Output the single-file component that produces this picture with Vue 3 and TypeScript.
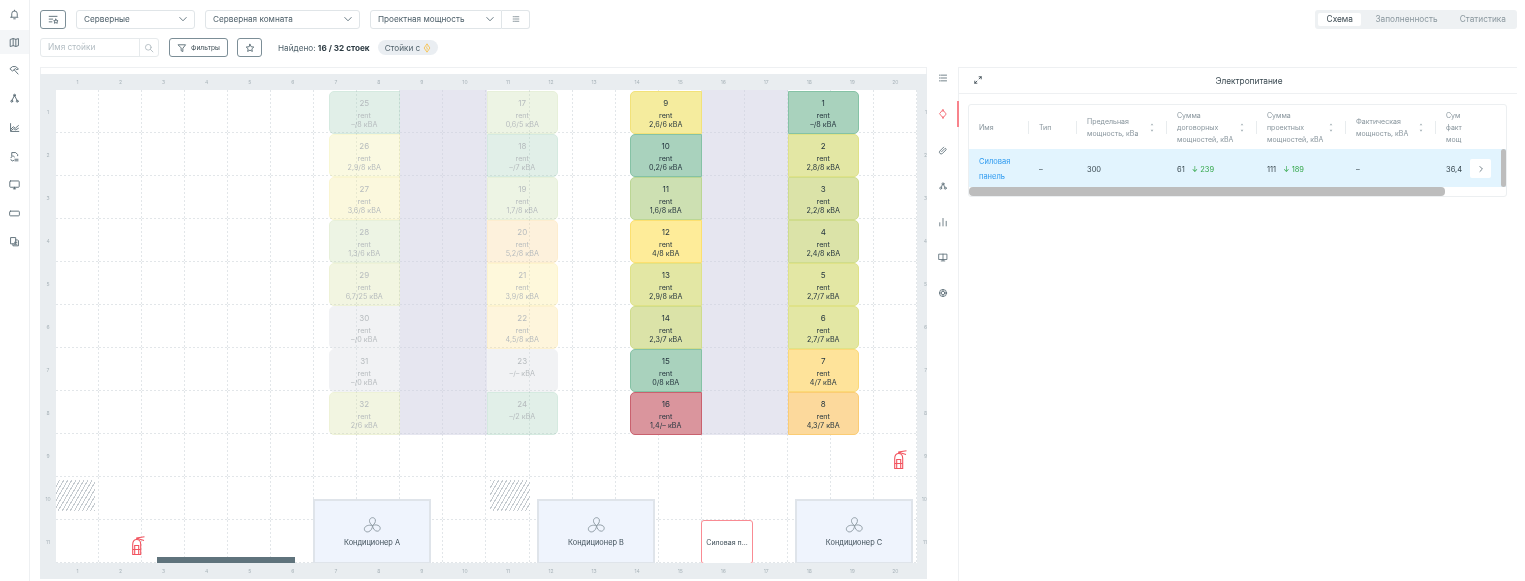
<template>
  <div class="page">
    <aside class="side">
      <div v-for="(name, i) in sideIcons" :key="name" class="side-item" :class="{ active: i === 1 }">
        <svg class="ico" viewBox="0 0 14 14"><path v-for="d in icons[name]" :key="d" :d="d" /></svg>
      </div>
    </aside>

    <main class="main">
      <div class="toolbar">
        <button class="icon-btn strong wide">
          <svg class="ico" viewBox="0 0 14 14"><path v-for="d in icons.listStar" :key="d" :d="d" /></svg>
        </button>
        <div class="select s1">Серверные<svg class="chev" viewBox="0 0 10 10"><path d="M1.5 3.2 5 6.8l3.5-3.6" /></svg></div>
        <div class="select s2">Серверная комната<svg class="chev" viewBox="0 0 10 10"><path d="M1.5 3.2 5 6.8l3.5-3.6" /></svg></div>
        <div class="joined">
          <div class="select s3">Проектная мощность<svg class="chev" viewBox="0 0 10 10"><path d="M1.5 3.2 5 6.8l3.5-3.6" /></svg></div>
          <button class="icon-btn list-btn">
            <svg class="ico tiny" viewBox="0 0 14 14"><path v-for="d in icons.list" :key="d" :d="d" /></svg>
          </button>
        </div>
        <div class="tabs">
          <span v-for="(t, i) in tabs" :key="t" class="tab" :class="{ on: i === 0 }">{{ t }}</span>
        </div>
      </div>

      <div class="toolbar second">
        <div class="search">
          <span class="placeholder">Имя стойки</span>
          <span class="search-btn">
            <svg class="ico small light" viewBox="0 0 14 14"><circle cx="6" cy="6" r="4" /><path d="m9 9 3.5 3.5" /></svg>
          </span>
        </div>
        <button class="filter-btn">
          <svg class="ico small dark" viewBox="0 0 14 14"><path d="M2 2.5h10L8.2 7.4V12L5.8 10.8V7.4z" /></svg>
          Фильтры
        </button>
        <button class="icon-btn strong star">
          <svg class="ico small dark" viewBox="0 0 14 14"><path d="m7 1.8 1.6 3.4 3.7.5-2.7 2.5.7 3.6L7 10l-3.3 1.8.7-3.6-2.7-2.5 3.7-.5z" /></svg>
        </button>
        <span class="found">Найдено: <b>16 / 32 стоек</b></span>
        <span class="chip">Стойки с
          <svg class="bolt" viewBox="0 0 10 12"><path d="M5 .8 8.6 6 5 11.2 1.4 6z" /><path class="inner" d="M5.5 3 3.9 6.2h2L4.6 9" /></svg>
        </span>
      </div>

      <div class="content">
        <section class="map">
          <div class="strip"></div>
          <div class="map-grid">
            <div class="corner"></div>
            <div class="ruler-x"><span v-for="n in 20" :key="n">{{ n }}</span></div>
            <div class="corner"></div>

            <div class="ruler-y"><span v-for="n in 11" :key="n">{{ n }}</span></div>
            <div class="canvas">
              <div class="cells"><i v-for="n in 220" :key="n"></i></div>
              <div v-for="(c, i) in corridors" :key="i" class="corridor" :style="box(c.x, 90, c.w, 345)"></div>
              <div
                v-for="r in racks"
                :key="r.n"
                class="rack"
                :class="[r.side, { faded: r.n > 16 }]"
                :style="rackStyle(r)"
              >
                <b>{{ r.n }}</b>
                <span v-if="r.rent">rent</span>
                <span>{{ r.val }} кВА</span>
              </div>
              <div class="hatch" :style="box(56, 480, 39, 31)"></div>
              <div class="hatch" :style="box(490, 480, 40, 31)"></div>
              <svg v-for="(e, i) in extinguishers" :key="i" class="ext" :style="box(e.x, e.y, 15, 20)" viewBox="0 0 15 20">
                <path d="M1.7 18.5V8.5C1.7 5 3.5 3.5 5.7 3.5S9.7 5 9.7 8.5v10z" />
                <path d="M3.7 18.5V9.500h4v9M1.700 13.500h8" />
                <path d="M5.7 3.500V2L13.500.8M5.700 2.200 13 4.500" />
              </svg>
              <div class="duct" :style="box(157, 557, 138, 7)"></div>
              <div v-for="a in coolers" :key="a.name" class="cooler" :style="box(a.x, 499, 118, 65)">
                <svg class="fan" viewBox="0 0 20 20">
                  <path d="M10 10C7 8 6 5 7.500 3 9 1 12.500 1.500 13 4 13.500 6.500 12 8.500 10 10z" />
                  <path d="M10 10C12.500 9 15.500 9 17.500 11 19 13 17.500 16 15 16 12.500 16 10.500 13.500 10 10z" />
                  <path d="M10 10C10 13 8.500 15.500 6 16.500 3.500 17.500 1 15.500 1.500 13 2 10.500 6 9 10 10z" />
                </svg>
                {{ a.name }}
              </div>
              <div class="panel-node" :style="box(701, 520, 52, 44)">Силовая п...</div>
            </div>
            <div class="ruler-y right"><span v-for="n in 11" :key="n">{{ n }}</span></div>

            <div class="corner"></div>
            <div class="ruler-x"><span v-for="n in 20" :key="n">{{ n }}</span></div>
            <div class="corner"></div>
          </div>
        </section>

        <nav class="right-nav">
          <div v-for="(name, i) in navIcons" :key="name" class="nav-item" :class="{ active: i === 1 }">
            <svg class="ico" viewBox="0 0 14 14"><path v-for="d in icons[name]" :key="d" :d="d" /></svg>
          </div>
        </nav>

        <section class="panel">
          <header class="panel-head">
            <svg class="ico expand" viewBox="0 0 14 14"><path d="M8.5 2.5h3v3M5.500 11.500h-3v-3M11.500 2.500l-3 3M2.500 11.500l3-3" /></svg>
            <span>Электропитание</span>
          </header>
          <div class="table-card">
            <div class="thead">
              <div v-for="c in columns" :key="c.title" class="th" :style="{ width: c.w + 'px' }">
                <span class="th-text" v-html="c.title"></span>
                <svg v-if="c.sort" class="sort" viewBox="0 0 6 12"><path d="M3 1.5 4.500 3.500h-3zM3 10.500 1.500 8.500h3z" /></svg>
              </div>
            </div>
            <div class="tbody">
              <div class="td" style="width: 60px"><a class="link">Силовая панель</a></div>
              <div class="td" style="width: 48px">–</div>
              <div class="td" style="width: 90px">300</div>
              <div class="td" style="width: 90px">61 <em>↓ 239</em></div>
              <div class="td" style="width: 89px">111 <em>↓ 189</em></div>
              <div class="td" style="width: 90px">–</div>
              <div class="td">36,4</div>
              <button class="row-btn">
                <svg class="ico small" viewBox="0 0 14 14"><path d="m5.5 3.500 3.500 3.500-3.500 3.500" /></svg>
              </button>
              <div class="v-thumb"></div>
            </div>
            <div class="h-scroll"><div class="h-thumb"></div></div>
          </div>
        </section>
      </div>
    </main>
  </div>
</template>

<script setup lang="ts">
interface Rack {
  n: number
  val: string
  color: string
  rent: boolean
  x: number
  row: number
  side: string
}

const COL_W = 71.5

const icons: Record<string, string[]> = {
  bell: ['M3.5 9.5V6a3.5 3.5 0 0 1 7 0v3.5l1 1h-9z', 'M6 12.5h2', 'M7 1.5v1'],
  map: ['M2 3l3.3-1 3.4 1L12 2v9l-3.3 1-3.4-1L2 12z', 'M5.3 2v9M8.7 3v9'],
  tool: ['M1.5 4.5 4.500 2h4l3.500 3-2 1-2-1.500L6.500 6 5 7.500z', 'M6.500 6 11.500 11.500'],
  nodes: ['M7 3 3.5 10M7 3l3.5 7', 'M8.2 2.8a1.2 1.2 0 1 1-2.4 0 1.2 1.2 0 0 1 2.4 0z', 'M4.7 10.500a1.2 1.2 0 1 1-2.4 0 1.2 1.2 0 0 1 2.4 0z', 'M11.700 10.500a1.2 1.2 0 1 1-2.4 0 1.2 1.2 0 0 1 2.4 0z'],
  chart: ['M2 2v10h10.5', 'M2.5 9 5.500 6 8 8l4-3.500', 'M2.500 11 6 8.500 8.500 10 12 8'],
  fileSync: ['M3.5 6V2h5l2.500 2.500V6', 'M2.500 8.500a2.500 2.500 0 0 1 4.500-1', 'M7.500 10.500h4M7.500 12.500h4', 'M2.500 11a2 2 0 0 0 3.500 1'],
  monitor: ['M2 2.500h10a1 1 0 0 1 1 1v6a1 1 0 0 1-1 1H2a1 1 0 0 1-1-1v-6a1 1 0 0 1 1-1z', 'M5.500 12.500h3M7 10.500v2'],
  rect: ['M2 4h10a1.2 1.2 0 0 1 1.2 1.2v3.6A1.2 1.2 0 0 1 12 10H2A1.2 1.2 0 0 1 .8 8.8V5.2A1.2 1.2 0 0 1 2 4z'],
  docs: ['M2.5 2h6v8h-6z', 'M8.5 5H11l1 1v6.500H5V10', 'M7 8h3M7 10.500h3'],
  list: ['M2 3h1M2 7h1M2 11h1', 'M4.500 3h7.500M4.500 7h7.500M4.500 11h7.500'],
  listStar: ['M1.5 3h10M1.500 6.500h4.500M1.500 10h3.500', 'M10 6.500l.9 1.8 1.9.3-1.4 1.3.4 1.9-1.800-.9-1.800.9.4-1.900-1.400-1.300 1.900-.3z'],
  bolt: ['M7 1.500 11.500 7 7 12.500 2.500 7z', 'M7 .5v3M7 10.500v3'],
  link: ['M5 9.500 9.500 5a1.300 1.300 0 0 1 1.800 1.800L6 12a2.500 2.500 0 0 1-3.500-3.500l5.500-5.500'],
  cluster: ['M8.4 4a1.4 1.4 0 1 1-2.8 0 1.4 1.4 0 0 1 2.8 0z', 'M5.2 10a1.4 1.4 0 1 1-2.8 0 1.4 1.4 0 0 1 2.8 0z', 'M11.600 10a1.4 1.4 0 1 1-2.8 0 1.4 1.4 0 0 1 2.8 0z', 'M6 5.200 4.800 8.500M8 5.200l1.200 3.300'],
  bars: ['M2.5 8v4.500M7 2v10.500M11.500 6v6.500'],
  book: ['M1.5 3h11v7.500h-11z', 'M7 3v9', 'M4.500 12.500h5'],
  gear: ['M12 7A5 5 0 1 1 2 7a5 5 0 0 1 10 0z', 'M9.500 7a2.500 2.500 0 1 1-5 0 2.500 2.500 0 0 1 5 0z', 'M7 2v2.500M7 9.500V12M2 7h2.500M9.500 7H12'],
}

const sideIcons = ['bell', 'map', 'tool', 'nodes', 'chart', 'fileSync', 'monitor', 'rect', 'docs']
const navIcons = ['list', 'bolt', 'link', 'cluster', 'bars', 'book', 'gear']
const tabs = ['Схема', 'Заполненность', 'Статистика']

const C = {
  teal: '#a9d2bd',
  lime: '#cde0b2',
  olive: '#dbe3a8',
  pale: '#e3e7a4',
  butter: '#f2f0a8',
  yellow: '#f5ec9e',
  gold: '#feec99',
  amber: '#fee39a',
  orange: '#fcd99c',
  red: '#da959d',
  gray: '#d9dbe0',
}
const BORDER: Record<string, string> = {
  [C.teal]: '#85c2a5',
  [C.lime]: '#bbd694',
  [C.olive]: '#cfdc8c',
  [C.pale]: '#dfe288',
  [C.butter]: '#ebe980',
  [C.yellow]: '#f2e27a',
  [C.gold]: '#fce070',
  [C.amber]: '#fbd978',
  [C.orange]: '#fbcc74',
  [C.red]: '#c9616e',
  [C.gray]: '#d9dbe0',
}

function column(x: number, side: string, rows: [number, string, string, boolean?][]): Rack[] {
  return rows.map(([n, val, color, noRent], row) => ({ n, val, color, rent: !noRent, x, row, side }))
}

const racks: Rack[] = [
  ...column(328.5, 'round-left', [
    [25, '–/8', C.teal], [26, '2,9/8', C.butter], [27, '3,6/8', C.yellow], [28, '1,3/6', C.lime],
    [29, '6,7/25', C.olive], [30, '–/0', C.gray], [31, '–/0', C.gray], [32, '2/6', C.olive],
  ]),
  ...column(486.5, 'round-right', [
    [17, '0,6/5', C.lime], [18, '–/7', C.teal], [19, '1,7/8', C.lime], [20, '5,2/8', C.orange],
    [21, '3,9/8', C.gold], [22, '4,5/8', C.amber], [23, '–/–', C.gray, true], [24, '–/2', C.teal, true],
  ]),
  ...column(630, 'round-left', [
    [9, '2,6/6', C.yellow], [10, '0,2/6', C.teal], [11, '1,6/8', C.lime], [12, '4/8', C.gold],
    [13, '2,9/8', C.pale], [14, '2,3/7', C.olive], [15, '0/8', C.teal], [16, '1,4/–', C.red],
  ]),
  ...column(787.5, 'round-right', [
    [1, '–/8', C.teal], [2, '2,8/8', C.pale], [3, '2,2/8', C.olive], [4, '2,4/8', C.olive],
    [5, '2,7/7', C.pale], [6, '2,7/7', C.pale], [7, '4/7', C.amber], [8, '4,3/7', C.orange],
  ]),
]

const corridors = [
  { x: 400, w: 87 },
  { x: 701.5, w: 86 },
]
const extinguishers = [
  { x: 131, y: 536 },
  { x: 893, y: 450 },
]
const coolers = [
  { name: 'Кондиционер А', x: 313 },
  { name: 'Кондиционер В', x: 537 },
  { name: 'Кондиционер С', x: 795 },
]
const columns = [
  { title: 'Имя', w: 60, sort: false },
  { title: 'Тип', w: 48, sort: false },
  { title: 'Предельная<br>мощность, кВа', w: 90, sort: true },
  { title: 'Сумма<br>договорных<br>мощностей, кВА', w: 90, sort: true },
  { title: 'Сумма<br>проектных<br>мощностей, кВА', w: 89, sort: true },
  { title: 'Фактическая<br>мощность, кВА', w: 90, sort: true },
  { title: 'Сум<br>факт<br>мощ', w: 40, sort: false },
]

// координаты на схеме заданы от верхнего левого угла страницы
function box(x: number, y: number, w: number, h: number) {
  return { left: x - 56 + 'px', top: y - 90 + 'px', width: w + 'px', height: h + 'px' }
}

function rackStyle(r: Rack) {
  return {
    ...box(r.x, 90.5 + r.row * 43, COL_W, 43),
    background: r.color,
    borderColor: BORDER[r.color],
  }
}
</script>

<style scoped>
.page {
  display: flex;
  width: 1525px;
  height: 581px;
  overflow: hidden;
  background: #fff;
  color: #2c3a42;
  font-family: Inter, "Noto Sans", sans-serif;
  filter: blur(0.6px);
}

.side {
  width: 30px;
  flex: none;
  box-sizing: border-box;
  border-right: 1px solid #eef0f2;
}

.side-item {
  height: 28.6px;
  display: flex;
  align-items: center;
  justify-content: center;
}

.side-item.active {
  height: 24px;
  margin: 1.5px 0 2px;
  background: #f4f6f8;
}

.ico {
  width: 11px;
  height: 11px;
  fill: none;
  stroke: #5e6f78;
  stroke-width: 1.2;
  stroke-linecap: round;
  stroke-linejoin: round;
}

.ico.small {
  width: 10px;
  height: 10px;
}

.ico.tiny {
  width: 8px;
  height: 8px;
}

.ico.light {
  stroke: #aeb9bf;
}

.ico.dark {
  stroke: #50636d;
}

.main {
  flex: 1;
  min-width: 0;
  padding: 9.5px 8px 0 10px;
}

.toolbar {
  display: flex;
  align-items: center;
  height: 19px;
  gap: 10px;
}

.toolbar.second {
  margin-top: 9.5px;
  gap: 0;
}

button {
  font-family: inherit;
  background: #fff;
  padding: 0;
}

.icon-btn {
  display: flex;
  align-items: center;
  justify-content: center;
  height: 19px;
  box-sizing: border-box;
  border: 1px solid #e0e5e8;
  border-radius: 3px;
}

.icon-btn.strong {
  border: 1.2px solid #7c8e97;
}

.wide {
  width: 26px;
}

.select {
  display: flex;
  align-items: center;
  justify-content: space-between;
  height: 19px;
  box-sizing: border-box;
  padding: 0 6px 0 7px;
  border: 1px solid #e0e5e8;
  border-radius: 3px;
  font-size: 8.2px;
  color: #4d5f69;
}

.s1 {
  width: 119px;
}

.s2 {
  width: 155px;
}

.joined {
  display: flex;
}

.s3 {
  width: 132px;
  border-radius: 3px 0 0 3px;
}

.list-btn {
  width: 28px;
  border-left: 0;
  border-radius: 0 3px 3px 0;
}

.chev {
  width: 10px;
  height: 10px;
  fill: none;
  stroke: #6d7e87;
  stroke-width: 1;
}

.tabs {
  display: flex;
  align-items: center;
  margin-left: auto;
  height: 19px;
  padding: 0 0 0 3px;
  box-sizing: border-box;
  border-radius: 3px;
  background: #eef1f3;
  font-size: 8.3px;
  color: #8b989f;
}

.tab {
  padding: 0 11px;
  line-height: 13px;
  border-radius: 2px;
}

.tab.on {
  margin-right: 3px;
  padding: 0 8.5px;
  background: #fff;
  color: #3a4951;
}

.search {
  display: flex;
  width: 119px;
  height: 19px;
  box-sizing: border-box;
  border: 1px solid #e6eaec;
  border-radius: 3px;
  font-size: 8.3px;
}

.placeholder {
  flex: 1;
  padding-left: 7px;
  line-height: 17px;
  color: #b3bdc3;
}

.search-btn {
  display: flex;
  align-items: center;
  justify-content: center;
  width: 18px;
  border-left: 1px solid #e6eaec;
}

.filter-btn {
  display: flex;
  align-items: center;
  gap: 4px;
  width: 59px;
  height: 19px;
  margin-left: 10px;
  padding-left: 7px;
  box-sizing: border-box;
  border: 1.2px solid #7c8e97;
  border-radius: 3px;
  font-size: 6.6px;
  color: #3a4951;
}

.star {
  width: 25px;
  margin-left: 9px;
}

.found {
  margin-left: 16px;
  font-size: 8.2px;
  color: #4d5f69;
}

.found b {
  color: #2c3a42;
  font-weight: 700;
}

.chip {
  display: flex;
  align-items: center;
  gap: 3px;
  height: 15px;
  margin-left: 8px;
  padding: 0 7px;
  border-radius: 8px;
  background: #eaeef2;
  font-size: 8.2px;
  color: #53646d;
}

.bolt {
  width: 8px;
  height: 10px;
  fill: none;
  stroke: #f6c65b;
  stroke-width: 1.2;
}

.bolt .inner {
  stroke-width: 0.8;
}

.content {
  display: flex;
  margin-top: 10px;
  height: 514px;
}

.map {
  width: 887px;
  flex: none;
}

.strip {
  height: 7px;
  box-sizing: border-box;
  border: 1px solid #eef0f2;
  border-bottom: 0;
}

.map-grid {
  display: grid;
  grid-template-columns: 16px 861px 10px;
  grid-template-rows: 16px 473px 16px;
  background: #e9edf0;
}

.ruler-x {
  display: flex;
}

.ruler-x span {
  flex: 1;
  text-align: center;
  font-size: 5px;
  line-height: 16px;
  color: #a9b4ba;
}

.ruler-y {
  display: flex;
  flex-direction: column;
}

.ruler-y span {
  flex: 1;
  display: flex;
  align-items: center;
  justify-content: center;
  font-size: 5px;
  color: #a9b4ba;
}

.ruler-y.right span {
  justify-content: flex-end;
}

.canvas {
  position: relative;
  background: #fff;
  overflow: hidden;
}

.cells {
  display: grid;
  grid-template-columns: repeat(20, 43.05px);
  grid-template-rows: repeat(11, 43px);
  height: 100%;
}

.cells i {
  background:
    linear-gradient(#e2e6e9 50%, transparent 0) right top / 1px 4px repeat-y,
    linear-gradient(90deg, #e2e6e9 50%, transparent 0) left bottom / 4px 1px repeat-x;
}

.corridor {
  position: absolute;
  background: rgba(205, 205, 226, 0.5);
}

.rack {
  position: absolute;
  box-sizing: border-box;
  display: flex;
  flex-direction: column;
  align-items: center;
  padding-top: 6.5px;
  border: 1.6px solid;
  font-size: 7.2px;
  line-height: 8.4px;
  color: #26363f;
  white-space: nowrap;
}

.rack b {
  margin-bottom: 3.2px;
  font-weight: 400;
  font-size: 8px;
  line-height: 11px;
}

.round-left {
  border-radius: 5px 0 0 5px;
}

.round-right {
  border-radius: 0 5px 5px 0;
}

.faded {
  opacity: 0.34;
}

.hatch {
  position: absolute;
  background: repeating-linear-gradient(
    -60deg,
    #c5cbd0 0,
    #c5cbd0 1px,
    #fff 1px,
    #fff 3.5px
  );
}

.ext {
  position: absolute;
  fill: none;
  stroke: #f2545f;
  stroke-width: 1.1;
}

.duct {
  position: absolute;
  background: #5f737c;
}

.cooler {
  position: absolute;
  box-sizing: border-box;
  display: flex;
  flex-direction: column;
  align-items: center;
  padding-top: 15px;
  gap: 3px;
  border: 2px solid #dfe4ea;
  background: #eff4fd;
  font-size: 7.4px;
  color: #3e4e58;
}

.fan {
  width: 19px;
  height: 19px;
  fill: none;
  stroke: #8d9aa2;
  stroke-width: 1;
}

.panel-node {
  position: absolute;
  box-sizing: border-box;
  display: flex;
  align-items: center;
  justify-content: center;
  padding-top: 1px;
  border: 1.5px solid #f98b93;
  border-radius: 3px;
  background: #fff;
  font-size: 7px;
  color: #3e4e58;
  white-space: nowrap;
}

.right-nav {
  width: 32px;
  flex: none;
  box-sizing: border-box;
  display: flex;
  flex-direction: column;
  gap: 13.9px;
  border-right: 1px solid #eef0f2;
  height: 514px;
}

.nav-item {
  position: relative;
  height: 22px;
  display: flex;
  align-items: center;
  justify-content: center;
  flex: none;
}

.nav-item .ico {
  width: 10px;
  height: 10px;
}

.nav-item.active .ico {
  stroke: #f4606b;
}

.nav-item.active::after {
  content: "";
  position: absolute;
  right: -1px;
  top: -2px;
  bottom: -2px;
  width: 2px;
  background: #f8838c;
}

.panel {
  flex: 1;
  min-width: 0;
  border-top: 1px solid #eef0f2;
}

.panel-head {
  position: relative;
  display: flex;
  align-items: center;
  justify-content: center;
  height: 26px;
  box-sizing: border-box;
  padding-left: 22px;
  border-bottom: 1px solid #eef0f2;
  font-size: 8.3px;
  color: #3a4951;
}

.expand {
  position: absolute;
  left: 14px;
  top: 7px;
  width: 10px;
  height: 10px;
  stroke: #3a4951;
}

.table-card {
  width: 539px;
  margin: 10px 0 0 9px;
  box-sizing: border-box;
  border: 1px solid #eceff1;
  border-radius: 3px;
  overflow: hidden;
}

.thead {
  display: flex;
  height: 44px;
}

.th {
  position: relative;
  flex: none;
  box-sizing: border-box;
  display: flex;
  align-items: center;
  padding-top: 2px;
  padding-left: 10px;
}

.th-text {
  font-size: 7px;
  line-height: 12px;
  color: #87949c;
  white-space: nowrap;
}

.th:not(:last-child)::after {
  content: "";
  position: absolute;
  right: 0;
  top: 16px;
  height: 13px;
  width: 1px;
  background: #e8ecee;
}

.sort {
  position: absolute;
  right: 12px;
  top: 17px;
  width: 6px;
  height: 11px;
  fill: #a7b2b8;
}

.tbody {
  position: relative;
  display: flex;
  align-items: center;
  height: 38px;
  background: #e2f4fe;
  font-size: 7.5px;
  color: #3a4951;
}

.td {
  flex: none;
  box-sizing: border-box;
  padding-top: 2px;
  padding-left: 10px;
}

.td em {
  margin-left: 5px;
  font-style: normal;
  color: #35a84c;
}

.link {
  display: block;
  width: 36px;
  line-height: 15px;
  color: #2f9bf0;
}

.row-btn {
  position: absolute;
  left: 501px;
  top: 10px;
  width: 21px;
  height: 19px;
  display: flex;
  align-items: center;
  justify-content: center;
  border: 0;
  border-radius: 2px;
  background: #fff;
}

.v-thumb {
  position: absolute;
  right: 0;
  top: 0;
  bottom: 0;
  width: 5px;
  background: #bdbdbd;
  border-radius: 3px;
}

.h-scroll {
  height: 9px;
}

.h-thumb {
  width: 476px;
  height: 9px;
  border-radius: 4px;
  background: #bdbdbd;
}
</style>
